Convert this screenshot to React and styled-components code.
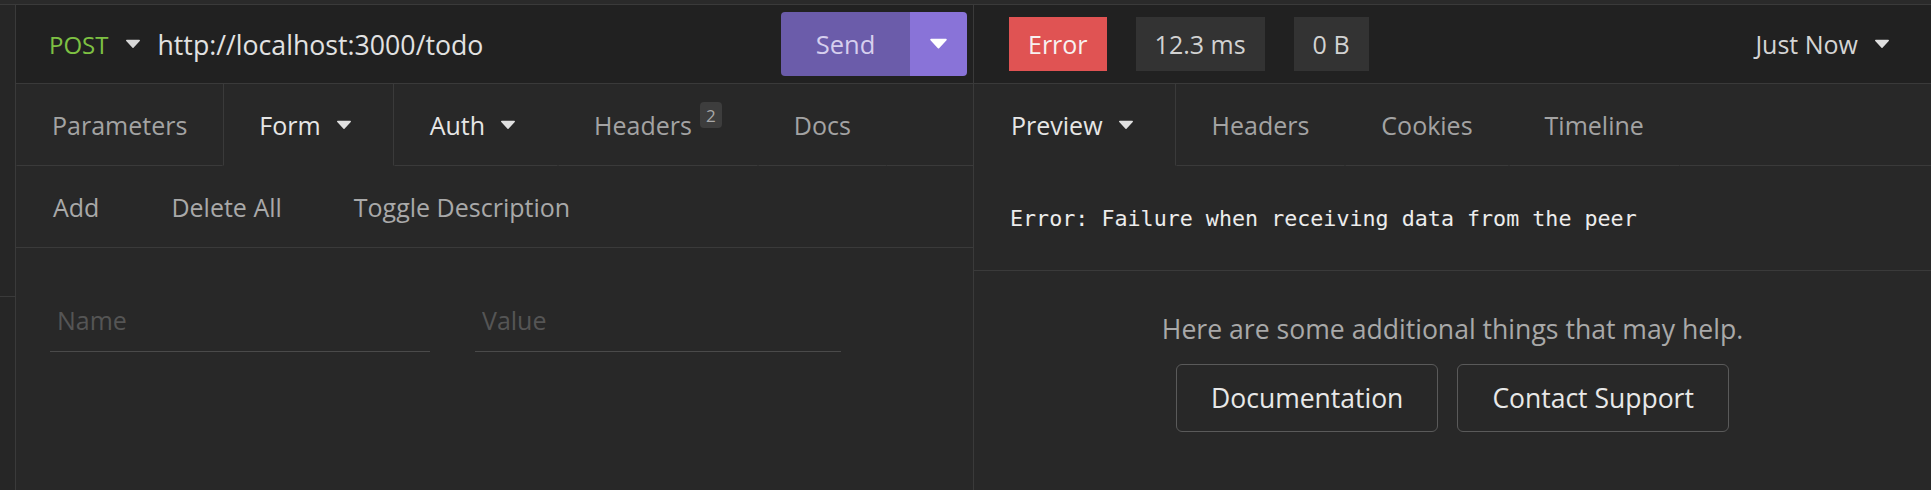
import styled, { createGlobalStyle } from "styled-components";

const GlobalStyle = createGlobalStyle`
  html, body {
    margin: 0;
    padding: 0;
    background: #282828;
  }
  body {
    font-family: "Open Sans", "Noto Sans", sans-serif;
  }
  * {
    box-sizing: border-box;
  }
`;

const Page = styled.div`
  width: 1931px;
  height: 490px;
  display: flex;
  flex-direction: column;
  background: #282828;
  overflow: hidden;
`;

const TopStrip = styled.div`
  height: 5px;
  flex-shrink: 0;
  background: #2a2a2a;
  border-bottom: 1px solid #3a3a3a;
`;

const Main = styled.div`
  flex: 1;
  display: flex;
`;

const Sidebar = styled.div`
  width: 16px;
  flex-shrink: 0;
  background: #262626;
  border-right: 1px solid #3a3a3a;
`;

const SidebarTop = styled.div`
  height: 292px;
  border-bottom: 1px solid #3a3a3a;
`;

const Pane = styled.div`
  display: flex;
  flex-direction: column;
  width: ${(p) => (p.$width ? p.$width + "px" : "auto")};
  flex: ${(p) => (p.$width ? "none" : "1")};
  border-right: ${(p) => (p.$divider ? "1px solid #3a3a3a" : "none")};
`;

const PaneHeader = styled.div`
  height: 79px;
  display: flex;
  align-items: center;
  background: #212121;
  border-bottom: 1px solid #3a3a3a;
  padding: ${(p) => p.$pad || "0"};
`;

const Method = styled.div`
  display: flex;
  align-items: center;
  gap: 17px;
  color: #7ec143;
  font-size: 24px;
  margin-left: 33px;
`;

const Url = styled.div`
  color: #e2e2e2;
  font-size: 26.7px;
  margin-left: 16px;
  flex: 1;
`;

const SendGroup = styled.div`
  display: flex;
  height: 64px;
  border-radius: 4px;
  overflow: hidden;
  margin-right: 6px;
`;

const SendLabel = styled.div`
  width: 129px;
  display: flex;
  align-items: center;
  justify-content: center;
  background: #6b5caa;
  color: #d6cfee;
  font-size: 25.5px;
`;

const SendCaret = styled.div`
  width: 57px;
  display: flex;
  align-items: center;
  justify-content: center;
  background: #8973d8;
`;

const Badge = styled.div`
  height: 54px;
  display: flex;
  align-items: center;
  padding: 0 19px;
  margin-right: 29px;
  background: ${(p) => (p.$error ? "#e05353" : "#333333")};
  color: ${(p) => (p.$error ? "#f7f1f1" : "#d2d2d2")};
  font-size: 25px;
`;

const TimeMenu = styled.div`
  margin-left: auto;
  margin-right: 41px;
  display: flex;
  align-items: center;
  gap: 16px;
  color: #d4d4d4;
  font-size: 25px;
`;

const TabRow = styled.div`
  height: 82px;
  display: flex;
`;

const Tab = styled.div`
  height: 100%;
  display: flex;
  align-items: center;
  padding: 0 35px;
  font-size: 25px;
  color: ${(p) => (p.$bright ? "#e6e6e6" : "#a3a3a3")};
  border-bottom: 1px solid ${(p) => (p.$active ? "transparent" : "#3a3a3a")};
  border-left: 1px solid ${(p) => (p.$active && !p.$edge ? "#3a3a3a" : "transparent")};
  border-right: 1px solid ${(p) => (p.$active ? "#3a3a3a" : "transparent")};
  ${(p) => (p.$edge ? "border-left: none; padding-left: 37px;" : "")}
`;

const TabCaret = styled.span`
  display: flex;
  margin: 0 6px 0 15px;
`;

const Count = styled.span`
  align-self: flex-start;
  margin-top: 18px;
  margin-left: 8px;
  height: 26px;
  min-width: 22px;
  border-radius: 4px;
  background: #3d3d3d;
  color: #a8a8a8;
  font-size: 17px;
  display: flex;
  align-items: center;
  justify-content: center;
`;

const TabFill = styled.div`
  flex: 1;
  border-bottom: 1px solid #3a3a3a;
`;

const ActionRow = styled.div`
  height: 82px;
  display: flex;
  align-items: center;
  padding-left: 1px;
  border-bottom: 1px solid #3a3a3a;
`;

const Action = styled.div`
  padding: 0 36px;
  color: #a9a9a9;
  font-size: 25px;
`;

const PairRow = styled.div`
  display: flex;
  padding: 40px 0 0 34px;
  gap: 45px;
`;

const Field = styled.input`
  width: ${(p) => p.$w}px;
  height: 64px;
  padding: 0 0 0 7px;
  background: transparent;
  border: none;
  border-bottom: 1px solid #4a4a4a;
  outline: none;
  color: #dddddd;
  font-family: inherit;
  font-size: 25px;

  &::placeholder {
    color: #555555;
  }
`;

const ErrorBlock = styled.div`
  height: 105px;
  display: flex;
  align-items: center;
  padding-left: 36px;
  border-bottom: 1px solid #3a3a3a;
  color: #ececec;
  font-family: "DejaVu Sans Mono", "Liberation Mono", monospace;
  font-size: 21.7px;
`;

const Help = styled.div`
  display: flex;
  flex-direction: column;
  align-items: center;
  padding-top: 40px;
`;

const HelpText = styled.div`
  color: #a9a9a9;
  font-size: 26.6px;
  line-height: 36px;
`;

const HelpButtons = styled.div`
  display: flex;
  gap: 19px;
  margin-top: 17px;
`;

const HelpButton = styled.div`
  height: 68px;
  display: flex;
  align-items: center;
  padding: 0 ${(p) => p.$pad || 35}px;
  border: 1px solid #5a5a5a;
  border-radius: 6px;
  color: #e8e8e8;
  font-size: 26.5px;
`;

const Caret = ({ color = "#e0e0e0", w = 16 }) => (
  <svg width={w} height={w * 0.6} viewBox="0 0 16 10">
    <path
      d="M1.5 1.5 H14.5 L8 8.5 Z"
      fill={color}
      stroke={color}
      strokeWidth="1.5"
      strokeLinejoin="round"
    />
  </svg>
);

export default function App() {
  return (
    <Page>
      <GlobalStyle />
      <TopStrip />
      <Main>
        <Sidebar>
          <SidebarTop />
        </Sidebar>

        <Pane $width={958} $divider>
          <PaneHeader>
            <Method>
              POST
              <Caret color="#d8d8d8" />
            </Method>
            <Url>http://localhost:3000/todo</Url>
            <SendGroup>
              <SendLabel>Send</SendLabel>
              <SendCaret>
                <Caret color="#ffffff" w={19} />
              </SendCaret>
            </SendGroup>
          </PaneHeader>

          <TabRow>
            <Tab>Parameters</Tab>
            <Tab $active $bright>
              Form
              <TabCaret>
                <Caret />
              </TabCaret>
            </Tab>
            <Tab $bright>
              Auth
              <TabCaret>
                <Caret />
              </TabCaret>
            </Tab>
            <Tab>
              Headers
              <Count>2</Count>
            </Tab>
            <Tab>Docs</Tab>
            <TabFill />
          </TabRow>

          <ActionRow>
            <Action>Add</Action>
            <Action>Delete All</Action>
            <Action>Toggle Description</Action>
          </ActionRow>

          <PairRow>
            <Field $w={380} placeholder="Name" />
            <Field $w={366} placeholder="Value" />
          </PairRow>
        </Pane>

        <Pane>
          <PaneHeader $pad="0 0 0 35px">
            <Badge $error>Error</Badge>
            <Badge>12.3 ms</Badge>
            <Badge>0 B</Badge>
            <TimeMenu>
              Just Now
              <Caret />
            </TimeMenu>
          </PaneHeader>

          <TabRow>
            <Tab $active $edge $bright>
              Preview
              <TabCaret>
                <Caret />
              </TabCaret>
            </Tab>
            <Tab>Headers</Tab>
            <Tab>Cookies</Tab>
            <Tab>Timeline</Tab>
            <TabFill />
          </TabRow>

          <ErrorBlock>Error: Failure when receiving data from the peer</ErrorBlock>

          <Help>
            <HelpText>Here are some additional things that may help.</HelpText>
            <HelpButtons>
              <HelpButton $pad={34}>Documentation</HelpButton>
              <HelpButton $pad={34}>Contact Support</HelpButton>
            </HelpButtons>
          </Help>
        </Pane>
      </Main>
    </Page>
  );
}
